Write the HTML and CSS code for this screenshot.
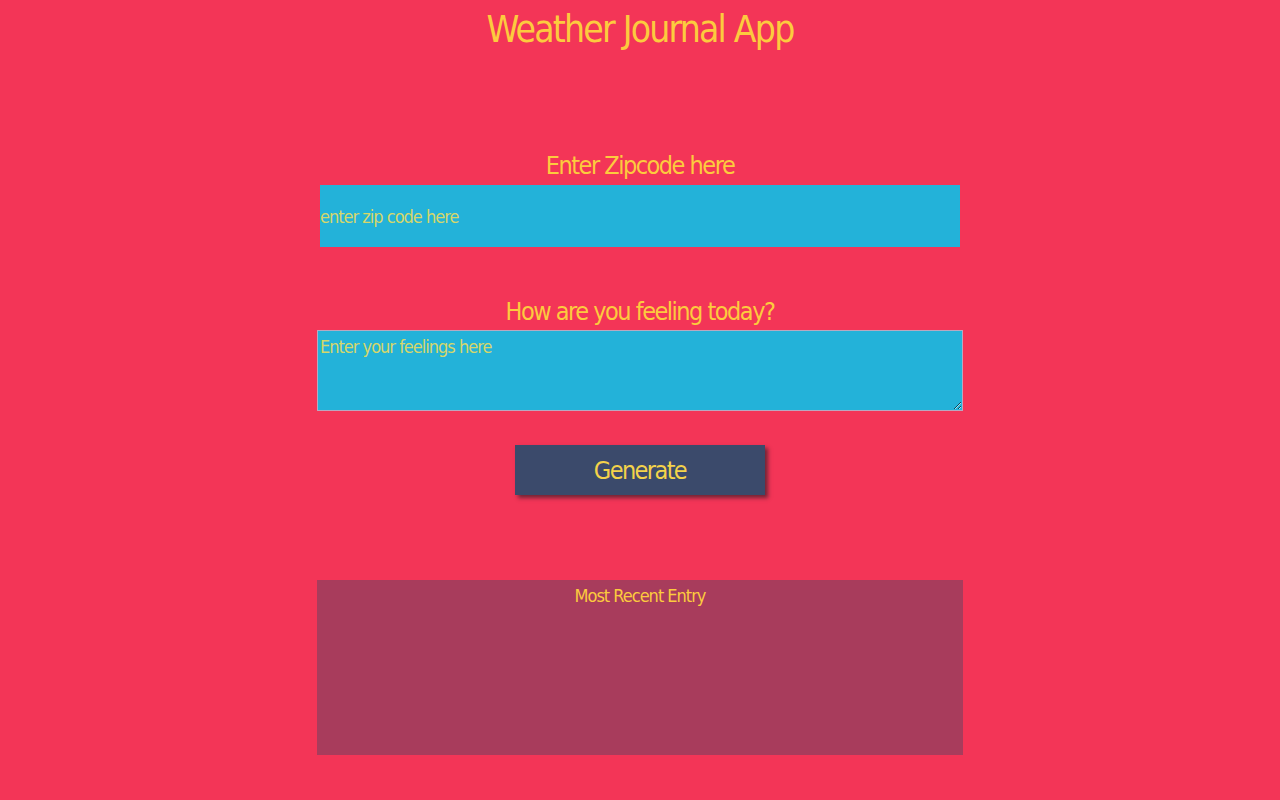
FILE: index.html
```html
<!DOCTYPE html>
<html lang="en">
<head>
<meta charset="utf-8">
<title>Weather Journal App</title>
<link rel="stylesheet" href="styles.css">
</head>
<body>
<main class="app">
  <h1 class="title">Weather Journal App</h1>
  <section class="holder zip">
    <label class="label" for="zip">Enter Zipcode here</label>
    <input class="zip-input" id="zip" type="text" placeholder="enter zip code here">
  </section>
  <section class="holder feel">
    <label class="label" for="feelings">How are you feeling today?</label>
    <textarea class="feel-input" id="feelings" placeholder="Enter your feelings here"></textarea>
  </section>
  <button class="generate" type="button">Generate</button>
  <section class="entry">
    <div class="entry-title">Most Recent Entry</div>
  </section>
</main>
</body>
</html>
```

FILE: styles.css
```css
html, body {
  margin: 0;
  padding: 0;
}
body {
  background: #f33557;
  font-family: "Liberation Sans Narrow", "DejaVu Sans Condensed", "Liberation Sans", sans-serif;
  color: #fccb3e;
  height: 800px;
  overflow: hidden;
}
.app {
  display: flex;
  flex-direction: column;
  align-items: center;
}
.title {
  margin: 0;
  font-size: 37px;
  letter-spacing: -1.8px;
  font-weight: normal;
  line-height: 60px;
  height: 60px;
}
.holder {
  display: flex;
  flex-direction: column;
  align-items: center;
}
.zip {
  margin-top: 88px;
}
.feel {
  margin-top: 48px;
}
.label {
  font-size: 25px;
  letter-spacing: -1.5px;
  line-height: 36px;
  height: 36px;
  display: block;
}
.feel .label {
  height: 34px;
  line-height: 34px;
}
.zip-input {
  box-sizing: border-box;
  width: 640px;
  height: 62px;
  margin-top: 1px;
  border: none;
  padding: 0;
  background: #23b2d9;
  font-family: inherit;
  font-size: 18px;
  letter-spacing: -1px;
  color: #d6d76a;
  outline: none;
}
.feel-input {
  box-sizing: border-box;
  width: 646px;
  height: 81px;
  margin: 1px 0 0 0;
  border: 1px solid #b9a8c0;
  padding: 5px 2px 2px 2px;
  background: #23b2d9;
  font-family: inherit;
  font-size: 18px;
  letter-spacing: -1px;
  color: #d6d76a;
  resize: both;
  outline: none;
}
.zip-input::placeholder,
.feel-input::placeholder {
  color: #d6d76a;
  opacity: 1;
}
.generate {
  margin-top: 34px;
  width: 250px;
  height: 50px;
  border: none;
  background: #3b4a6b;
  color: #f4d34a;
  font-family: inherit;
  font-size: 25px;
  letter-spacing: -1.6px;
  box-shadow: 3px 3px 4px rgba(60, 30, 40, 0.7);
  padding: 0;
}
.entry {
  margin-top: 85px;
  width: 646px;
  height: 175px;
  background: #a83c5c;
  box-sizing: border-box;
  text-align: center;
}
.entry-title {
  font-size: 18px;
  letter-spacing: -1px;
  line-height: 32px;
  color: #fccb3e;
}
```
